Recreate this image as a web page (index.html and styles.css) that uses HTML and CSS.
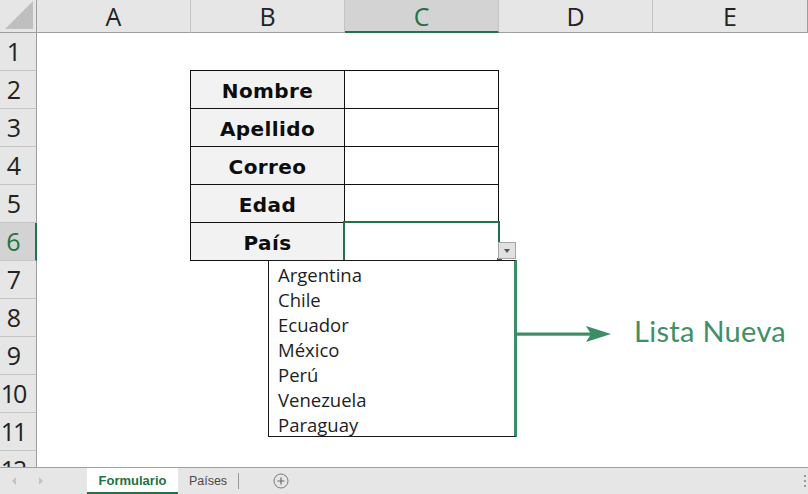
FILE: index.html
```html
<!DOCTYPE html>
<html lang="es">
<head>
<meta charset="utf-8">
<title>Formulario</title>
<link rel="stylesheet" href="styles.css">
</head>
<body>
<div class="app">
  <div class="sheet">
    <div class="colhead">
      <div class="corner">
        <svg class="corner-tri" width="37" height="33" viewBox="0 0 37 33"><polygon points="33,1 33,29 5,29" fill="#bfbfbf"/></svg>
      </div>
      <div class="ch w154">A</div>
      <div class="ch w154">B</div>
      <div class="ch w154 sel">C</div>
      <div class="ch w154">D</div>
      <div class="ch w155">E</div>
    </div>
    <div class="body">
      <div class="rowheads">
        <div class="rh">1</div>
        <div class="rh">2</div>
        <div class="rh">3</div>
        <div class="rh">4</div>
        <div class="rh">5</div>
        <div class="rh sel">6</div>
        <div class="rh">7</div>
        <div class="rh">8</div>
        <div class="rh">9</div>
        <div class="rh">10</div>
        <div class="rh">11</div>
        <div class="rh">12</div>
      </div>
      <div class="cells">
        <div class="form">
          <div class="lbl">Nombre</div><div class="val"></div>
          <div class="lbl">Apellido</div><div class="val"></div>
          <div class="lbl">Correo</div><div class="val"></div>
          <div class="lbl">Edad</div><div class="val"></div>
          <div class="lbl">País</div><div class="val"></div>
          <div class="selbox"></div>
          <div class="fill-handle"></div>
          <div class="dd-btn"><span class="dd-tri"></span></div>
        </div>
      </div>
    </div>
  </div>

  <ul class="dd-list">
    <li>Argentina</li>
    <li>Chile</li>
    <li>Ecuador</li>
    <li>México</li>
    <li>Perú</li>
    <li>Venezuela</li>
    <li>Paraguay</li>
  </ul>

  <svg class="arrow" width="96" height="20" viewBox="0 0 96 20">
    <rect x="0" y="8.5" width="76" height="3.2" fill="#3b8d66"/>
    <polygon points="70,2 95,10 70,18 75,10" fill="#3b8d66"/>
  </svg>
  <div class="note">Lista Nueva</div>

  <div class="tabbar">
    <div class="nav">
      <span class="nav-l"></span>
      <span class="nav-r"></span>
    </div>
    <div class="tab active">Formulario</div>
    <div class="tab">Países</div>
    <div class="tab-sep"></div>
    <div class="add">
      <svg width="16" height="16" viewBox="0 0 16 16"><circle cx="8" cy="8" r="7" fill="none" stroke="#7a7a7a" stroke-width="1"/><path d="M8 4.5v7M4.5 8h7" stroke="#6a6a6a" stroke-width="1.2"/></svg>
    </div>
    <div class="spacer"></div>
    <div class="grip"><i></i><i></i><i></i></div>
  </div>
</div>
</body>
</html>
```
FILE: styles.css
```css
* { box-sizing: border-box; }
html, body { margin: 0; padding: 0; }
body {
  width: 808px;
  height: 494px;
  overflow: hidden;
  background: #fff;
  font-family: "Open Sans", "Noto Sans", sans-serif;
}
.app {
  position: relative;
  width: 808px;
  height: 494px;
  display: flex;
  flex-direction: column;
}
.sheet {
  height: 467px;
  overflow: hidden;
  display: flex;
  flex-direction: column;
}
.colhead {
  display: flex;
  height: 33px;
  flex: none;
}
.corner {
  width: 37px;
  height: 33px;
  background: #e6e6e6;
  border-right: 1px solid #9e9e9e;
  border-bottom: 1px solid #9e9e9e;
  position: relative;
}
.corner-tri { position: absolute; left: 0; top: 0; }
.ch {
  height: 33px;
  background: #e6e6e6;
  border-right: 1px solid #c4c4c4;
  border-bottom: 1px solid #9e9e9e;
  display: flex;
  align-items: center;
  justify-content: center;
  font-size: 25px;
  color: #222;
  line-height: 1;
  padding-top: 1px;
}
.w154 { width: 154px; }
.w155 { width: 155px; border-right-color: #9e9e9e; }
.ch.sel {
  background: #d3d3d3;
  color: #217346;
  border-bottom: 2px solid #217346;
}
.body {
  display: flex;
  flex: 1;
}
.rowheads {
  width: 37px;
  flex: none;
  display: flex;
  flex-direction: column;
}
.rh {
  height: 38px;
  flex: none;
  background: #e6e6e6;
  border-right: 1px solid #9e9e9e;
  border-bottom: 1px solid #c4c4c4;
  font-size: 25px;
  line-height: 1;
  letter-spacing: -2px;
  color: #222;
  display: flex;
  align-items: center;
  justify-content: center;
  padding-right: 10px;
  white-space: nowrap;
}
.rh.sel {
  background: #d3d3d3;
  color: #217346;
  border-right: 2px solid #217346;
}
.cells {
  flex: 1;
  position: relative;
}
.form {
  position: relative;
  margin-left: 153px;
  margin-top: 37px;
  width: 309px;
  display: grid;
  grid-template-columns: 154px 154px;
  grid-auto-rows: 38px;
  border-left: 1px solid #111;
  border-top: 1px solid #111;
}
.lbl, .val {
  border-right: 1px solid #111;
  border-bottom: 1px solid #111;
}
.lbl {
  background: #f2f2f2;
  display: flex;
  align-items: center;
  justify-content: center;
  font-family: "DejaVu Sans", "Open Sans", sans-serif;
  font-weight: 700;
  font-size: 20px;
  letter-spacing: 0.4px;
  color: #0d0d0d;
  padding-top: 2px;
}
.val { background: #fff; }
.selbox {
  position: absolute;
  left: 152px;
  top: 150px;
  width: 157px;
  height: 41px;
  border: 2px solid #217346;
}
.fill-handle {
  position: absolute;
  left: 306px;
  top: 187px;
  width: 5px;
  height: 5px;
  background: #217346;
}
.dd-btn {
  position: absolute;
  left: 307px;
  top: 171px;
  width: 18px;
  height: 17px;
  background: #e1e1e1;
  border: 1px solid #a6a6a6;
  display: flex;
  align-items: center;
  justify-content: center;
}
.dd-tri {
  width: 0;
  height: 0;
  border-left: 3.5px solid transparent;
  border-right: 3.5px solid transparent;
  border-top: 4px solid #555;
}
.dd-list {
  position: absolute;
  left: 268px;
  top: 260px;
  width: 249px;
  height: 177px;
  margin: 0;
  padding: 1px 0 0 9px;
  list-style: none;
  background: #fff;
  border-left: 1px solid #1a1a1a;
  border-top: 1px solid #1a1a1a;
  border-bottom: 1px solid #1a1a1a;
  border-right: 3px solid #3b8d66;
  font-size: 18.5px;
  line-height: 25px;
  color: #1e1e1e;
  overflow: hidden;
}
.dd-list li { height: 25px; white-space: nowrap; }
.arrow {
  position: absolute;
  left: 516px;
  top: 324px;
}
.note {
  position: absolute;
  left: 634px;
  top: 316px;
  font-family: "Lato", "Open Sans", sans-serif;
  font-size: 29px;
  line-height: 29px;
  color: #3f9068;
  letter-spacing: 0.3px;
  white-space: nowrap;
}
.tabbar {
  height: 27px;
  flex: none;
  background: #e6e6e6;
  border-top: 1px solid #a0a0a0;
  display: flex;
  align-items: stretch;
}
.nav {
  width: 87px;
  display: flex;
  align-items: center;
  padding-left: 12px;
  gap: 23px;
}
.nav-l, .nav-r {
  width: 0;
  height: 0;
  border-top: 4px solid transparent;
  border-bottom: 4px solid transparent;
}
.nav-l { border-right: 4px solid #c3c3c3; }
.nav-r { border-left: 4px solid #c3c3c3; }
.tab {
  display: flex;
  align-items: center;
  justify-content: center;
  font-family: "Liberation Sans", Arial, sans-serif;
  font-size: 12.5px;
  color: #4a4a4a;
  padding-bottom: 1px;
}
.tab.active {
  width: 91px;
  background: #fff;
  color: #217346;
  font-weight: 700;
  font-size: 13px;
  border-bottom: 2px solid #217346;
  padding-bottom: 0;
}
.tab:not(.active) { width: 60px; }
.tab-sep {
  width: 1px;
  background: #9a9a9a;
  margin: 5px 0 5px 0;
}
.add {
  margin-left: 34px;
  display: flex;
  align-items: center;
}
.spacer { flex: 1; }
.grip {
  width: 6px;
  display: flex;
  flex-direction: column;
  justify-content: center;
  gap: 3px;
  padding-left: 2px;
}
.grip i {
  display: block;
  width: 2px;
  height: 2px;
  background: #9a9a9a;
}
```
